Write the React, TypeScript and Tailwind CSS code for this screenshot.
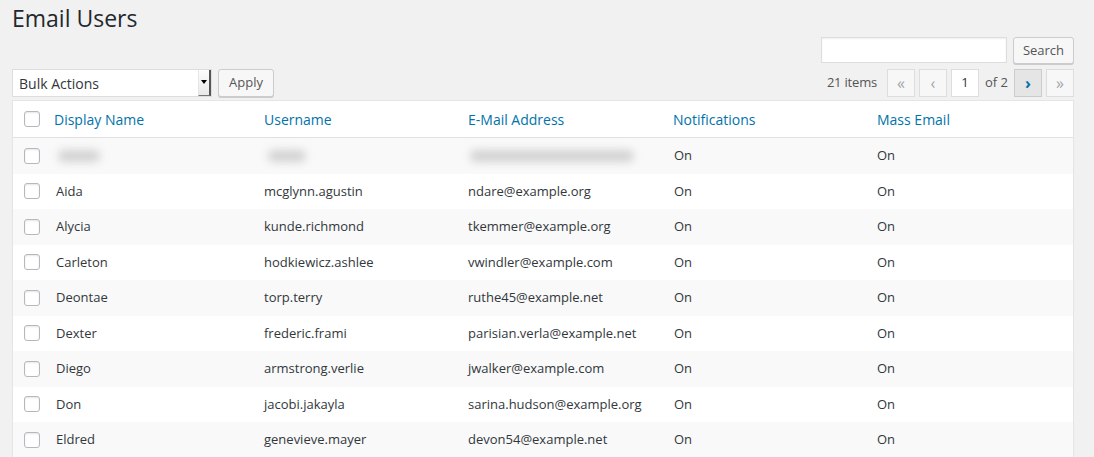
import React from "react";

type User = { name: string; username: string; email: string };

const users: User[] = [
    { name: "Aida", username: "mcglynn.agustin", email: "ndare@example.org" },
    { name: "Alycia", username: "kunde.richmond", email: "tkemmer@example.org" },
    { name: "Carleton", username: "hodkiewicz.ashlee", email: "vwindler@example.com" },
    { name: "Deontae", username: "torp.terry", email: "ruthe45@example.net" },
    { name: "Dexter", username: "frederic.frami", email: "parisian.verla@example.net" },
    { name: "Diego", username: "armstrong.verlie", email: "jwalker@example.com" },
    { name: "Don", username: "jacobi.jakayla", email: "sarina.hudson@example.org" },
    { name: "Eldred", username: "genevieve.mayer", email: "devon54@example.net" },
];

const Checkbox = () => (
    <span className="block w-[16px] h-[16px] bg-white border border-[#b4b9be] rounded-[3px] shadow-[inset_0_1px_2px_rgba(0,0,0,0.1)]" />
);

const PageButton = ({ label, active = false }: { label: string; active?: boolean }) => (
    <span
        className={`flex items-center justify-center w-[28px] h-[28px] border text-[16px] leading-none ${
            active
                ? "bg-[#e5e5e5] border-[#ccc] text-[#0073aa] font-bold"
                : "bg-[#f7f7f7] border-[#ddd] text-[#a0a5aa]"
        }`}
    >
        {label}
    </span>
);

const cols = ["w-[210px]", "w-[204px]", "w-[205px]", "w-[204px]"];

const Blob = ({ w }: { w: string }) => (
    <span className={`block ${w} h-[12px] rounded-full bg-[#d2d2d2] blur-[4px]`} />
);

const Row = ({ user, striped, blurred }: { user: User; striped: boolean; blurred?: boolean }) => (
    <div className={`flex items-center h-[35.5px] ${striped ? "bg-[#f9f9f9]" : "bg-white"}`}>
        <div className="w-[33px] pl-[11px] shrink-0">
            <Checkbox />
        </div>
        {blurred ? (
            <>
                <div className={`${cols[0]} pl-[12px] shrink-0`}>
                    <Blob w="w-[42px]" />
                </div>
                <div className={`${cols[1]} pl-[12px] shrink-0`}>
                    <Blob w="w-[38px]" />
                </div>
                <div className={`${cols[2]} pl-[10px] shrink-0`}>
                    <Blob w="w-[164px]" />
                </div>
            </>
        ) : (
            <>
                <div className={`${cols[0]} pl-[10px] shrink-0`}>{user.name}</div>
                <div className={`${cols[1]} pl-[8px] shrink-0`}>{user.username}</div>
                <div className={`${cols[2]} pl-[8px] shrink-0`}>{user.email}</div>
            </>
        )}
        <div className={`${cols[3]} pl-[9px] shrink-0`}>On</div>
        <div className="pl-[8px]">On</div>
    </div>
);

export default function App() {
    return (
        <div
            className="min-h-screen bg-[#f1f1f1] pl-[12px] pr-[20px] text-[#444] text-[13px]"
            style={{ fontFamily: '"Open Sans", "Noto Sans", sans-serif' }}
        >
            <h1 className="pt-[4px] text-[23px] leading-[29px] text-[#23282d]">Email Users</h1>

            <div className="flex justify-end gap-[6px] mt-[4px]">
                <span className="block w-[186px] h-[26px] bg-white border border-[#ddd] shadow-[inset_0_1px_2px_rgba(0,0,0,0.07)]" />
                <span className="flex items-center justify-center w-[61px] h-[27px] bg-[#f7f7f7] border border-[#ccc] rounded-[3px] shadow-[0_1px_0_#ccc] text-[#555]">
                    Search
                </span>
            </div>

            <div className="flex items-center justify-between mt-[5px] h-[28px]">
                <div className="flex items-center gap-[6px]">
                    <div className="flex w-[200px] h-[28px] bg-white border border-[#ddd]">
                        <span className="flex-1 flex items-center pl-[6px] text-[14px] text-[#32373c]">Bulk Actions</span>
                        <span className="relative w-[13px] border-l border-[#e5e5e5] border-r-2 border-r-[#555] border-b border-b-[#777] bg-gradient-to-b from-[#fdfdfd] to-[#e9e9e9]">
                            <span className="absolute left-[2px] top-[10px] w-0 h-0 border-l-[3px] border-r-[3px] border-t-[4px] border-l-transparent border-r-transparent border-t-black" />
                        </span>
                    </div>
                    <span className="flex items-center justify-center w-[56px] h-[28px] bg-[#f7f7f7] border border-[#ccc] rounded-[3px] shadow-[0_1px_0_#ccc] text-[#555]">
                        Apply
                    </span>
                </div>
                <div className="flex items-center gap-[4px]">
                    <span className="mr-[6px] text-[#555] tracking-[-0.2px]">21 items</span>
                    <PageButton label="«" />
                    <PageButton label="‹" />
                    <span className="flex items-center justify-center w-[28px] h-[28px] bg-white border border-[#ddd] text-[#32373c]">1</span>
                    <span className="mx-[2px] text-[#555]">of 2</span>
                    <PageButton label="›" active />
                    <PageButton label="»" />
                </div>
            </div>

            <div className="mt-[3px] bg-white border border-[#e5e5e5] shadow-[0_1px_1px_rgba(0,0,0,0.04)] text-[#32373c]">
                <div className="flex items-center h-[37px] border-b border-[#e1e1e1] text-[14px] text-[#0073aa]">
                    <div className="w-[33px] pl-[11px] shrink-0">
                        <Checkbox />
                    </div>
                    <div className={`${cols[0]} pl-[8px] shrink-0`}>Display Name</div>
                    <div className={`${cols[1]} pl-[8px] shrink-0`}>Username</div>
                    <div className={`${cols[2]} pl-[8px] shrink-0`}>E-Mail Address</div>
                    <div className={`${cols[3]} pl-[8px] shrink-0`}>Notifications</div>
                    <div className="pl-[8px]">Mass Email</div>
                </div>
                <Row user={users[0]} striped blurred />
                {users.map((u, i) => (
                    <Row key={u.username} user={u} striped={i % 2 === 1} />
                ))}
            </div>
        </div>
    );
}
